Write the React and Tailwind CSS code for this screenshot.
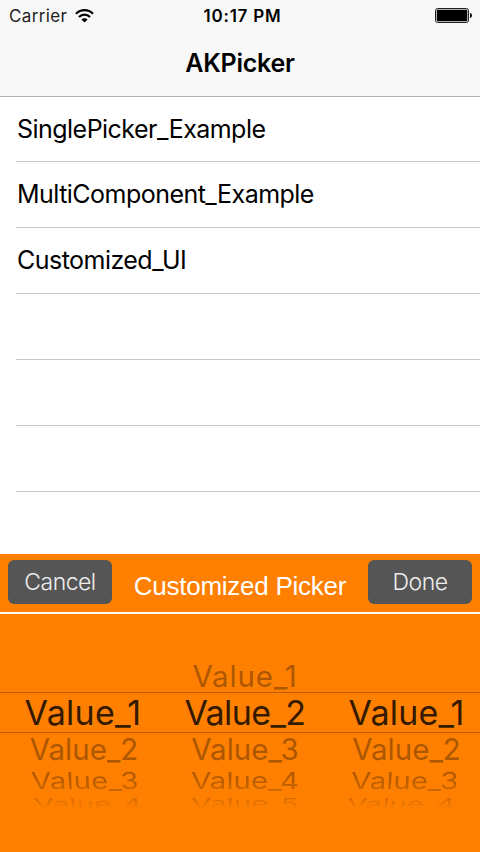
import React from 'react';

const menuItems = ['SinglePicker_Example', 'MultiComponent_Example', 'Customized_UI', '', '', ''];

const columns = [
  { className: 'w-[166px]', values: ['', 'Value_1', 'Value_2', 'Value_3', 'Value_4'], shift: ['', 'tracking-[0.3px]', 'translate-x-[1px]', 'translate-x-[2px] skew-x-[3deg]', 'translate-x-[5px] skew-x-[8deg]'] },
  { className: 'w-[158px]', values: ['Value_1', 'Value_2', 'Value_3', 'Value_4', 'Value_5'], shift: ['tracking-[0.8px]', 'tracking-[-0.6px]', '', '', ''] },
  { className: 'w-[156px] pl-[9px]', values: ['', 'Value_1', 'Value_2', 'Value_3', 'Value_4'], shift: ['', 'tracking-[0.2px]', '', '-translate-x-[2px] -skew-x-[3deg]', '-translate-x-[5px] -skew-x-[8deg]'] },
];

const slots = [
  { row: 'h-[35px]', text: 'text-[29.5px] text-[#ad5700]' },
  { row: 'h-[39px]', text: 'text-[34px] text-[#331a00]' },
  { row: 'h-[33px]', text: 'text-[29.5px] text-[#ad5700]' },
  { row: 'h-[29px]', text: 'text-[29.5px] scale-y-[0.79] bg-gradient-to-b from-[#b35a00] from-40% to-[#cc6600] to-80% bg-clip-text text-transparent' },
  { row: 'h-[18px]', text: 'text-[29.5px] scale-y-[0.5] bg-gradient-to-b from-[#d66b00] from-30% to-[#ff8000] to-78% bg-clip-text text-transparent' },
];

function Wifi() {
  return (
    <svg width="19" height="14" viewBox="0 0 19 14" fill="none" stroke="#000" strokeWidth="2.3">
      <path d="M1 4.8C5.8 0 13.2 0 18 4.8" />
      <path d="M4 8c3.1-3.1 7.9-3.1 11 0" />
      <path d="M6.4 10.5c1.7-1.7 4.5-1.7 6.2 0L9.5 13.6Z" fill="#000" stroke="none" />
    </svg>
  );
}

function Battery() {
  return (
    <svg width="38" height="15" viewBox="0 0 38 15">
      <rect x=".5" y=".5" width="33" height="14" rx="2" fill="none" stroke="#222" />
      <rect x="1.5" y="1.5" width="31" height="12" rx="1" fill="#000" stroke="#ccc" strokeWidth=".6" />
      <path d="M35 5c2.8.4 2.8 4.6 0 5Z" fill="#111" />
    </svg>
  );
}

export default function App() {
  return (
    <div className="flex h-[852px] w-[480px] flex-col overflow-hidden bg-white font-['Inter',sans-serif] text-black">
      <header className="h-[97px] shrink-0 border-b border-[#b2b2b2] bg-[#f8f8f8]">
        <div className="grid h-[31px] grid-cols-3 items-center pl-[9px] pr-[7px] text-[17px] leading-none">
          <div className="flex items-center gap-[8px]">
            <span className="pt-px tracking-[0.35px] text-[#222]">Carrier</span>
            <Wifi />
          </div>
          <span className="whitespace-nowrap pl-[3px] pt-px text-center font-semibold tracking-[0.75px]">10:17 PM</span>
          <div className="flex justify-end"><Battery /></div>
        </div>
        <h1 className="flex h-[65px] items-center justify-center text-[25px] font-semibold leading-none tracking-[-0.25px]">AKPicker</h1>
      </header>

      <ul className="h-[457px] shrink-0 pl-4">
        {menuItems.map((item, i) => (
          <li key={i} className={`flex items-center border-b border-[#c8c7cc] pl-px text-[25px] leading-none tracking-[-0.53px] ${i === 0 ? 'h-[65px]' : 'h-[66px]'}`}>
            {item}
          </li>
        ))}
      </ul>

      <section className="flex-1 bg-[#ff8000]">
        <div className="flex h-[58px] items-start justify-between px-2 pt-1.5 font-['Liberation_Sans',sans-serif] leading-none">
          <button className="h-[44px] w-[104px] rounded-[6px] bg-[#555] font-['Inter',sans-serif] text-[23px] font-light tracking-[-0.5px] text-[#eee]">Cancel</button>
          <span className="mt-[13px] whitespace-nowrap text-[26px] leading-[26px] tracking-[-0.25px] text-white">Customized Picker</span>
          <button className="h-[44px] w-[104px] rounded-[6px] bg-[#555] font-['Inter',sans-serif] text-[23px] font-light tracking-[-0.5px] text-[#eee]">Done</button>
        </div>
        <div className="h-[2px] bg-white" />
        <div className="relative flex pt-[44px]">
          <div className="absolute left-0 top-[78px] h-[41px] w-full border-y border-[#b85c00]" />
          {columns.map((column, c) => (
            <div key={c} className={column.className}>
              {slots.map((slot, s) => (
                <div key={s} className={`flex items-center justify-center ${slot.row}`}>
                  <span className={column.shift[s]}>
                    <span className={`block whitespace-nowrap leading-[40px] ${slot.text}`}>{column.values[s]}</span>
                  </span>
                </div>
              ))}
            </div>
          ))}
        </div>
      </section>
    </div>
  );
}
